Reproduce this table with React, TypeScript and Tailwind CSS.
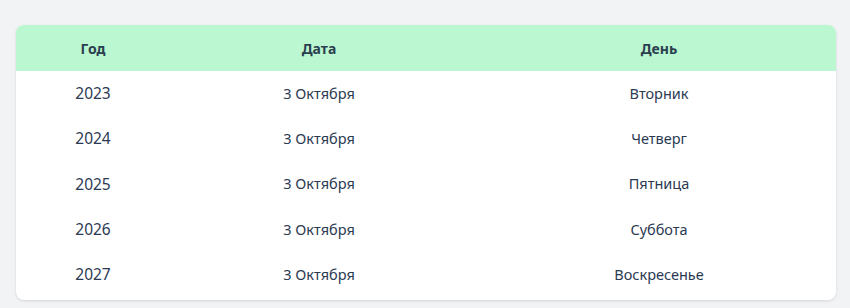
import React from 'react';

const rows = [
  { year: '2023', date: '3 Октября', day: 'Вторник' },
  { year: '2024', date: '3 Октября', day: 'Четверг' },
  { year: '2025', date: '3 Октября', day: 'Пятница' },
  { year: '2026', date: '3 Октября', day: 'Суббота' },
  { year: '2027', date: '3 Октября', day: 'Воскресенье' },
];

const font = { fontFamily: '"Noto Sans", "Open Sans", sans-serif' };

const App: React.FC = () => {
  return (
    <div className="min-h-screen w-[850px] h-[308px] bg-[#f2f3f5] pt-[25px] px-4" style={font}>
      {/* Table card */}
      <div className="w-[820px] bg-white rounded-lg shadow-[0_1px_3px_rgba(0,0,0,0.12)] overflow-hidden">
        <div className="grid grid-cols-[140px_326px_354px] h-[46px] items-center bg-[#bbf7d0] text-[14px] font-bold text-[#2a3f4f]">
          <div className="pl-[14px] text-center">Год</div>
          <div className="text-center">Дата</div>
          <div className="text-center">День</div>
        </div>
        <div className="pb-[3px]">
          {rows.map((r) => (
            <div key={r.year} className="grid grid-cols-[140px_326px_354px] h-[45.3px] items-center text-[14.5px] text-[#2b3a52]">
              <div className="pl-[14px] text-center text-[15.5px]">{r.year}</div>
              <div className="text-center">{r.date}</div>
              <div className="text-center">{r.day}</div>
            </div>
          ))}
        </div>
      </div>
    </div>
  );
};

export default App;
